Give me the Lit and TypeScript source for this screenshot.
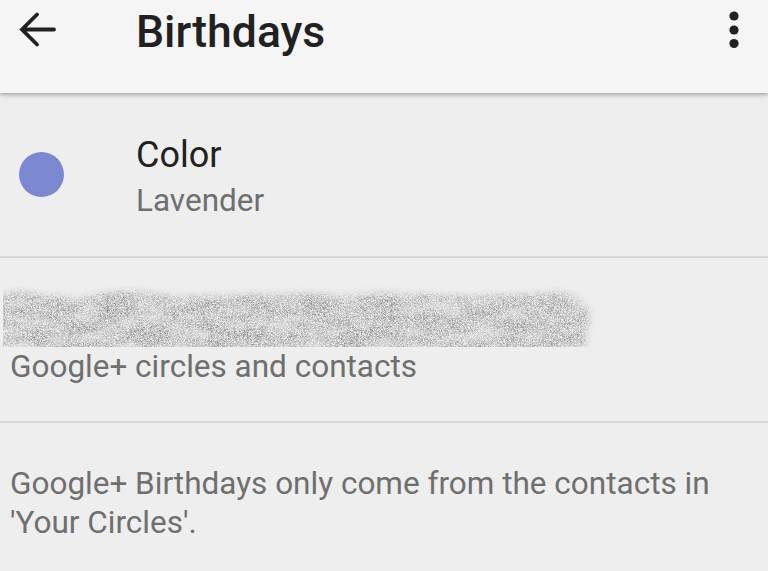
import { LitElement, html, css } from "lit";
import { customElement } from "lit/decorators.js";

@customElement("app-root")
export class AppRoot extends LitElement {
  static styles = css`
    :host { display: block; width: 768px; height: 571px; overflow: hidden; background: #eeeeee; font-family: Roboto, "Liberation Sans", sans-serif; }
    .bar { height: 93px; background: #f5f5f5; display: flex; align-items: flex-start; position: relative; box-shadow: 0 2px 4px rgba(0,0,0,.3); }
    .back { width: 38px; height: 36px; margin: 12px 0 0 18px; flex: none; }
    .title { margin: 8px 0 0 80px; font-size: 44.5px; line-height: 48px; font-weight: 500; color: #212121; flex: 1; }
    .more { width: 12px; height: 38px; margin: 11px 28px 0 0; flex: none; }
    .color { height: 165px; box-sizing: border-box; border-bottom: 2px solid #d6d6d6; display: flex; align-items: flex-start; }
    .dot { width: 45px; height: 45px; border-radius: 50%; background: #7b88cf; margin: 59px 0 0 19px; flex: none; }
    .color-text { margin: 39px 0 0 72px; }
    .label { font-size: 36px; line-height: 46px; color: #212121; }
    .sub { font-size: 31.5px; line-height: 40px; margin-top: 3px; color: #6f6f6f; }
    .circles { height: 165px; box-sizing: border-box; border-bottom: 2px solid #d6d6d6; padding-top: 28px; }
    .smudge { display: block; width: 600px; height: 61px; }
    .muted { font-size: 31.5px; line-height: 39px; color: #6f6f6f; padding-left: 10px; }
    .note { padding-top: 41px; }
  `;

  render() {
    return html`
      <div class="bar">
        <svg class="back" viewBox="0 0 38 36"><path d="M36 17.5H4M19 2.5 4 17.5 19 32.5" fill="none" stroke="#212121" stroke-width="3.8" stroke-linecap="round" stroke-linejoin="miter"/></svg>
        <div class="title">Birthdays</div>
        <svg class="more" viewBox="0 0 12 38"><circle cx="6" cy="5" r="4.6" fill="#212121"/><circle cx="6" cy="19" r="4.6" fill="#212121"/><circle cx="6" cy="32.5" r="4.6" fill="#212121"/></svg>
      </div>
      <div class="color">
        <div class="dot"></div>
        <div class="color-text">
          <div class="label">Color</div>
          <div class="sub">Lavender</div>
        </div>
      </div>
      <div class="circles">
        <svg class="smudge" viewBox="0 0 600 61" aria-hidden="true">
          <defs>
            <filter id="grain" x="-2%" y="-20%" width="104%" height="140%" color-interpolation-filters="sRGB">
              <feTurbulence type="fractalNoise" baseFrequency="2.3" numOctaves="1" seed="7" result="fine"/>
              <feColorMatrix in="fine" type="matrix" values="0 0 0 0 .5  0 0 0 0 .5  0 0 0 0 .5  2.2 0 0 0 -.72" result="specks"/>
              <feTurbulence type="fractalNoise" baseFrequency="0.03 0.07" numOctaves="2" seed="4" result="broad"/>
              <feColorMatrix in="broad" type="matrix" values="0 0 0 0 0  0 0 0 0 0  0 0 0 0 0  1.3 0 0 0 .15" result="patches"/>
              <feComposite in="specks" in2="patches" operator="in" result="mottled"/>
              <feGaussianBlur in="SourceAlpha" stdDeviation="3.5" result="shape"/>
              <feComposite in="mottled" in2="shape" operator="in"/>
            </filter>
            <clipPath id="frame"><rect x="3" y="0" width="597" height="61"/></clipPath>
          </defs>
          <g clip-path="url(#frame)">
            <path filter="url(#grain)" d="M-8 10 L14 7 L28 5 L42 9 L80 11 L100 8 L138 5 L170 10 L240 9 L290 7 L330 9 L380 6 L430 9 L480 10 L530 9 L560 5 L578 11 L588 22 L590 34 L586 52 L584 75 L-8 75 Z" fill="#000"/>
          </g>
        </svg>
        <div class="muted">Google+ circles and contacts</div>
      </div>
      <div class="muted note">Google+ Birthdays only come from the contacts in<br />'Your Circles'.</div>
    `;
  }
}
